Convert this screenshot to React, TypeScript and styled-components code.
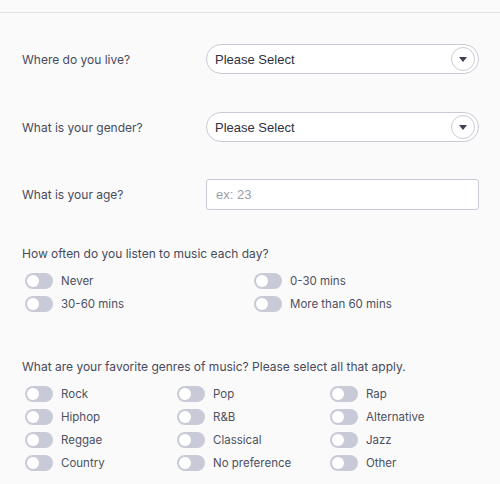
import React, { FC } from 'react';
import styled, { createGlobalStyle } from 'styled-components';

const GlobalStyle = createGlobalStyle`
  html, body {
    margin: 0;
    padding: 0;
    background: #fafafb;
  }
  body {
    font-family: Inter, "Liberation Sans", sans-serif;
    color: #4a4d5c;
  }
`;

const SPage = styled.div`
  width: 500px;
  min-height: 484px;
  padding-top: 12px;
  box-sizing: border-box;
`;

const SDivider = styled.div`
  border-top: 1px solid #e2e3e8;
`;

const SForm = styled.form`
  display: flex;
  flex-direction: column;
  padding: 31px 21px 0 22px;
`;

const SFieldRow = styled.div<{ gapAfter: number }>`
  display: grid;
  grid-template-columns: 184px 273px;
  align-items: center;
  margin-bottom: ${({ gapAfter }) => gapAfter}px;
`;

const SLabel = styled.label`
  font-size: 12px;
  color: #474a5a;
`;

const SSelect = styled.div`
  display: flex;
  align-items: center;
  justify-content: space-between;
  height: 30px;
  padding: 0 3px 0 8px;
  border: 1px solid #c9cbd5;
  border-radius: 16px;
  background: #fff;
  box-sizing: border-box;

  span {
    font-family: "Liberation Sans", Arial, sans-serif;
    font-size: 13px;
    color: #2f3140;
  }
`;

const SChevron = styled.div`
  display: flex;
  align-items: center;
  justify-content: center;
  width: 24px;
  height: 24px;
  border: 1px solid #c9cbd5;
  border-radius: 50%;
  box-sizing: border-box;
`;

const SInput = styled.input`
  height: 31px;
  padding: 0 9px;
  border: 1px solid #c9cbd5;
  border-radius: 3px;
  background: #fff;
  box-sizing: border-box;
  font-family: "Liberation Sans", Arial, sans-serif;
  font-size: 13px;
  outline: none;

  &::placeholder {
    color: #9a9caa;
  }
`;

const SQuestion = styled.p`
  margin: 0 0 7px;
  font-size: 12px;
  line-height: 16px;
  color: #474a5a;
`;

const SOptions = styled.div<{ columns: string; gapAfter: number }>`
  display: grid;
  grid-template-columns: ${({ columns }) => columns};
  grid-auto-rows: 23px;
  align-items: center;
  padding-left: 3px;
  margin-bottom: ${({ gapAfter }) => gapAfter}px;
`;

const SOption = styled.label`
  display: flex;
  align-items: center;
  gap: 8px;
  font-size: 11.5px;
  color: #4d5060;
`;

const SToggle = styled.span`
  position: relative;
  flex: none;
  width: 28px;
  height: 16px;
  border-radius: 8px;
  background: #c8cbd7;

  &::after {
    content: '';
    position: absolute;
    top: 2px;
    left: 2px;
    width: 12px;
    height: 12px;
    border-radius: 50%;
    background: #fff;
  }
`;

const Select: FC = () => (
  <SSelect>
    <span>Please Select</span>
    <SChevron>
      <svg width='8' height='5' viewBox='0 0 8 5'>
        <path d='M0 0h8L4 5z' fill='#3d4050' />
      </svg>
    </SChevron>
  </SSelect>
);

const frequencies = ['Never', '0-30 mins', '30-60 mins', 'More than 60 mins'];
const genres = [
  'Rock', 'Pop', 'Rap',
  'Hiphop', 'R&B', 'Alternative',
  'Reggae', 'Classical', 'Jazz',
  'Country', 'No preference', 'Other'
];

const App: FC = () => (
  <>
    <GlobalStyle />
    <SPage>
      <SDivider />
      <SForm>
        <SFieldRow gapAfter={38}>
          <SLabel>Where do you live?</SLabel>
          <Select />
        </SFieldRow>
        <SFieldRow gapAfter={37}>
          <SLabel>What is your gender?</SLabel>
          <Select />
        </SFieldRow>
        <SFieldRow gapAfter={36}>
          <SLabel>What is your age?</SLabel>
          <SInput placeholder='ex: 23' />
        </SFieldRow>

        <SQuestion>How often do you listen to music each day?</SQuestion>
        <SOptions columns='229px 229px' gapAfter={44}>
          {frequencies.map(f => (
            <SOption key={f}><SToggle />{f}</SOption>
          ))}
        </SOptions>

        <SQuestion>What are your favorite genres of music? Please select all that apply.</SQuestion>
        <SOptions columns='152px 153px 153px' gapAfter={0}>
          {genres.map(g => (
            <SOption key={g}><SToggle />{g}</SOption>
          ))}
        </SOptions>
      </SForm>
    </SPage>
  </>
);

export default App;
